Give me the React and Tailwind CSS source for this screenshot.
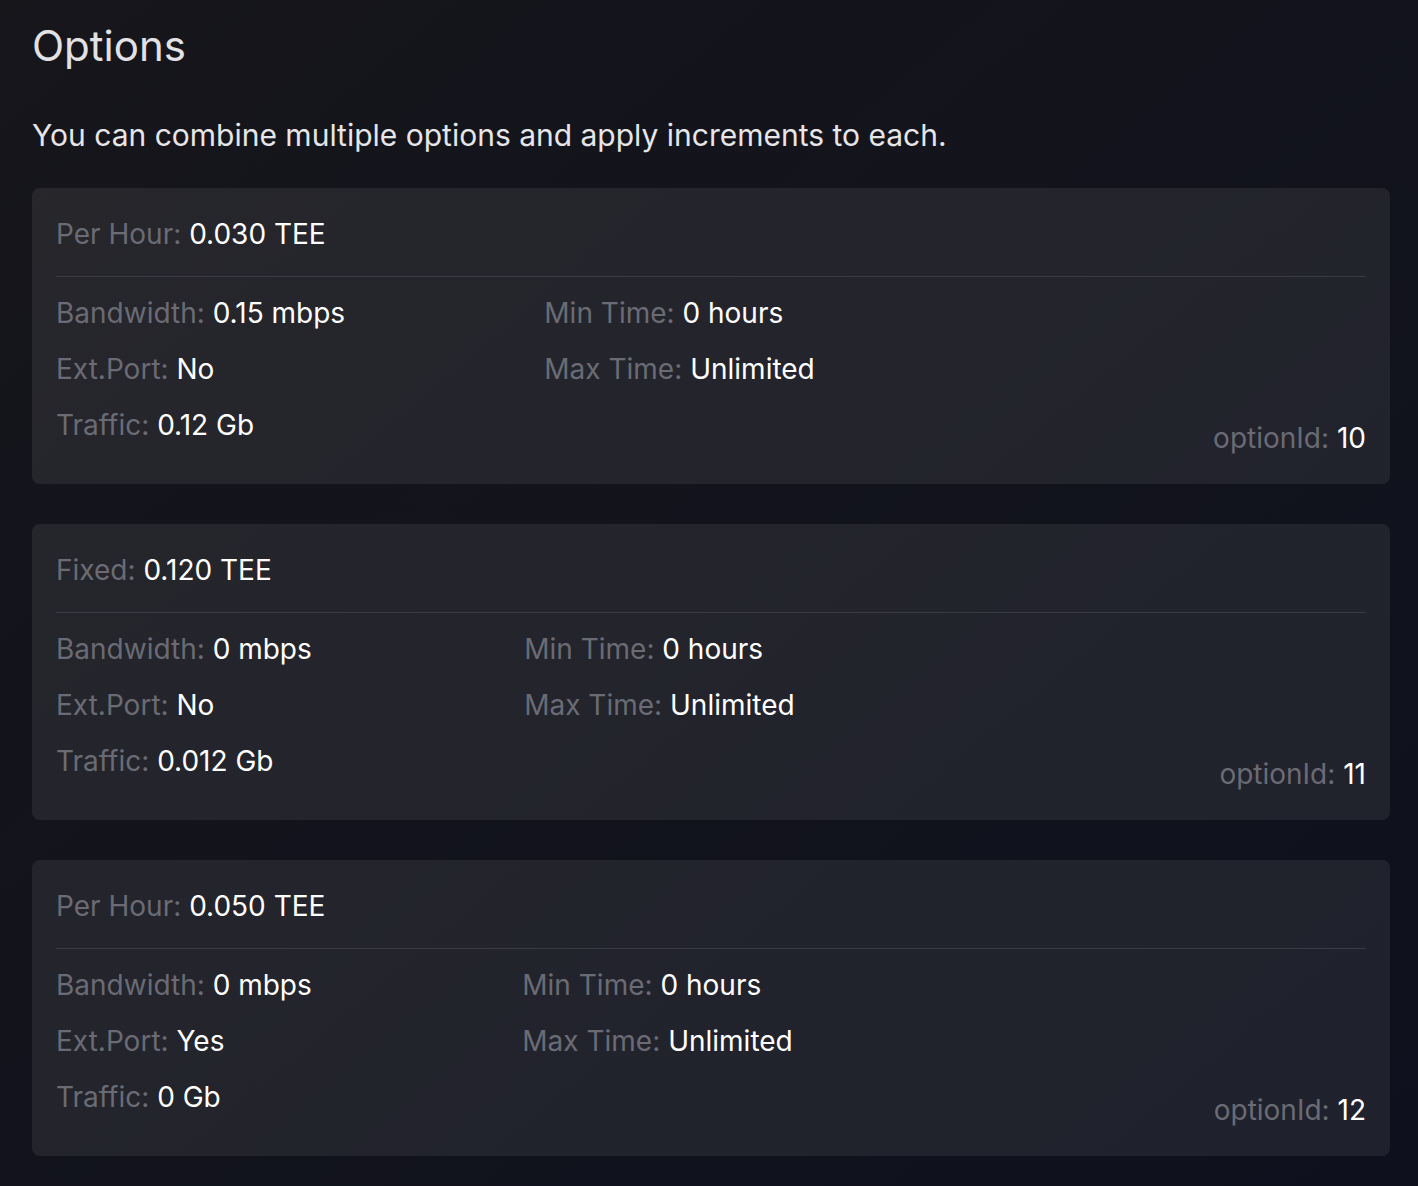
import React from "react";

const options = [
  {
    priceLabel: "Per Hour",
    price: "0.030 TEE",
    bandwidth: "0.15 mbps",
    extPort: "No",
    traffic: "0.12 Gb",
    minTime: "0 hours",
    maxTime: "Unlimited",
    id: 10,
  },
  {
    priceLabel: "Fixed",
    price: "0.120 TEE",
    bandwidth: "0 mbps",
    extPort: "No",
    traffic: "0.012 Gb",
    minTime: "0 hours",
    maxTime: "Unlimited",
    id: 11,
  },
  {
    priceLabel: "Per Hour",
    price: "0.050 TEE",
    bandwidth: "0 mbps",
    extPort: "Yes",
    traffic: "0 Gb",
    minTime: "0 hours",
    maxTime: "Unlimited",
    id: 12,
  },
];

function Field({ label, value }) {
  return (
    <div className="h-[44px] leading-[44px] whitespace-nowrap">
      <span className="text-[#6a6b74]">{label}: </span>
      <span className="text-white">{value}</span>
    </div>
  );
}

function OptionCard({ opt }) {
  return (
    <div className="rounded-lg bg-white/[0.075] px-6 pt-6 pb-6">
      <div className="border-b border-[#3a3b44] pb-5">
        <Field label={opt.priceLabel} value={opt.price} />
      </div>
      <div className="flex pt-[14px]">
        <div className="flex flex-auto flex-col gap-3 pb-[13px]">
          <Field label="Bandwidth" value={opt.bandwidth} />
          <Field label="Ext.Port" value={opt.extPort} />
          <Field label="Traffic" value={opt.traffic} />
        </div>
        <div className="flex flex-auto flex-col gap-3 pb-[13px]">
          <Field label="Min Time" value={opt.minTime} />
          <Field label="Max Time" value={opt.maxTime} />
        </div>
        <div className="flex flex-auto items-end justify-end">
          <Field label="optionId" value={opt.id} />
        </div>
      </div>
    </div>
  );
}

export default function App() {
  return (
    <div className="min-h-screen bg-gradient-to-br from-[#16161b] to-[#0e101d] pl-8 pr-7 pt-5 pb-8 font-['Inter',sans-serif] text-[28px]">
      <h1 className="text-[42px] leading-[52px] text-[#e2e2e4]">Options</h1>
      <p className="mt-[43px] text-[30px] leading-[40px] text-[#e6e6e8]">
        You can combine multiple options and apply increments to each.
      </p>
      <div className="mt-[33px] flex flex-col gap-10">
        {options.map((opt) => (
          <OptionCard key={opt.id} opt={opt} />
        ))}
      </div>
    </div>
  );
}
